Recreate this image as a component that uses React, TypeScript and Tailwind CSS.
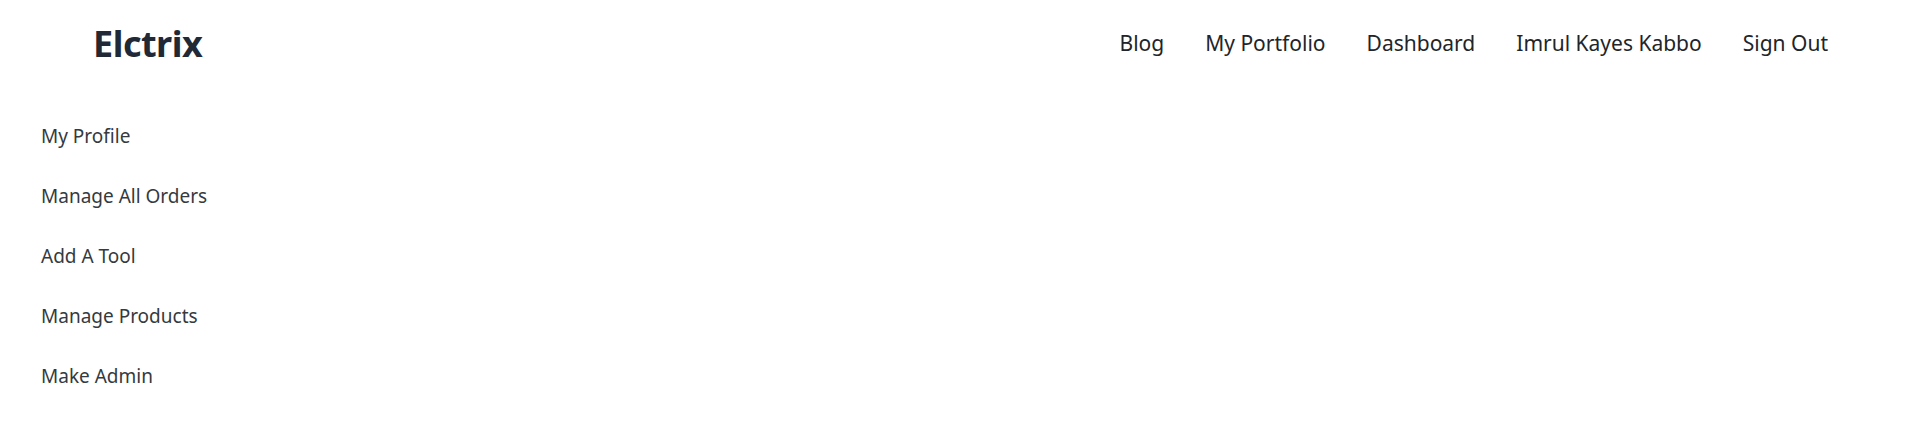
import React from "react";

const navLinks = ["Blog", "My Portfolio", "Dashboard", "Imrul Kayes Kabbo", "Sign Out"];
const sideLinks = ["My Profile", "Manage All Orders", "Add A Tool", "Manage Products", "Make Admin"];

export default function App() {
  return (
    <div className="min-h-screen w-full bg-white font-['Noto_Sans',sans-serif]">
      <header className="flex h-[87px] items-center justify-between pl-[93px] pr-[92px]">
        <a href="#" className="text-[36px] font-bold leading-none tracking-[-0.5px] text-[#212936]">
          Elctrix
        </a>
        <nav className="flex items-center gap-[41px] text-[21px] text-[#212529]">
          {navLinks.map((link) => (
            <a key={link} href="#" className="leading-none">
              {link}
            </a>
          ))}
        </nav>
      </header>

      <aside className="flex flex-col pt-[19px] pl-[41px]">
        {sideLinks.map((link) => (
          <a key={link} href="#" className="flex h-[60px] items-center text-[19px] text-[#343a40]">
            {link}
          </a>
        ))}
      </aside>
    </div>
  );
}
